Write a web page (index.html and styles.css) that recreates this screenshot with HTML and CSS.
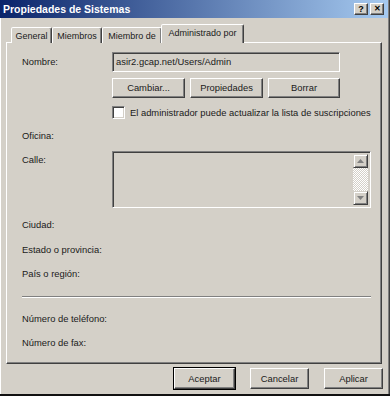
FILE: index.html
```html
<!DOCTYPE html>
<html lang="es">
<head>
  <meta charset="UTF-8">
  <title>Propiedades de Sistemas</title>
  <link rel="stylesheet" href="styles.css">
</head>
<body>
  <div class="window">
    <div class="titlebar">
      <span class="title">Propiedades de Sistemas</span>
      <div class="title-btns">
        <span class="tbtn">?</span>
        <span class="tbtn close">&#x2715;</span>
      </div>
    </div>
    <div class="content">
      <div class="tabs">
        <span class="tab t-general">General</span>
        <span class="tab t-members">Miembros</span>
        <span class="tab t-memberof">Miembro de</span>
        <span class="tab active">Administrado por</span>
      </div>
      <div class="panel">
        <div class="row r-name">
          <span class="label">Nombre:</span>
          <div class="field">asir2.gcap.net/Users/Admin</div>
        </div>
        <div class="row r-buttons">
          <span class="label"></span>
          <div class="btns">
            <button class="btn">Cambiar...</button>
            <button class="btn">Propiedades</button>
            <button class="btn">Borrar</button>
          </div>
        </div>
        <div class="row r-check">
          <span class="label"></span>
          <label class="check"><span class="box"></span>El administrador puede actualizar la lista de suscripciones</label>
        </div>
        <div class="row r-office"><span class="label">Oficina:</span></div>
        <div class="row r-street">
          <span class="label">Calle:</span>
          <div class="memo">
            <div class="scrollbar">
              <span class="arrow">
                <svg width="7" height="4" viewBox="0 0 7 4"><path d="M3.5 0L7 4H0z" fill="#808080"/></svg>
              </span>
              <span class="track"></span>
              <span class="arrow">
                <svg width="7" height="4" viewBox="0 0 7 4"><path d="M0 0H7L3.5 4z" fill="#808080"/></svg>
              </span>
            </div>
          </div>
        </div>
        <div class="row r-city"><span class="label">Ciudad:</span></div>
        <div class="row r-state"><span class="label">Estado o provincia:</span></div>
        <div class="row r-country"><span class="label">País o región:</span></div>
        <div class="sep"></div>
        <div class="row r-phone"><span class="label">Número de teléfono:</span></div>
        <div class="row r-fax"><span class="label">Número de fax:</span></div>
      </div>
      <div class="actions">
        <button class="btn default">Aceptar</button>
        <button class="btn">Cancelar</button>
        <button class="btn">Aplicar</button>
      </div>
    </div>
  </div>
</body>
</html>
```

FILE: styles.css
```css
* { box-sizing: border-box; }
body {
  margin: 0;
  background: #fff;
  font-family: "Liberation Sans", Arial, sans-serif;
  font-size: 9.4px;
  color: #1a1a1a;
}
.window {
  width: 390px;
  height: 396px;
  background: #d4d0c8;
  border-bottom: 2px solid #111;
  box-shadow: inset -1px 0 #404040, inset -2px 0 #808080, inset 1px 0 #fff;
}
.titlebar {
  height: 18px;
  margin-right: 2px;
  display: flex;
  align-items: center;
  justify-content: space-between;
  padding: 0 4px 0 3px;
  background: linear-gradient(to right, #0a246a, #a6caf0);
}
.title { color: #fff; font-weight: bold; font-size: 10.5px; }
.title-btns { display: flex; gap: 2px; }
.tbtn {
  width: 14px; height: 12px;
  display: flex; align-items: center; justify-content: center;
  background: #d4d0c8;
  border: 1px solid; border-color: #fff #404040 #404040 #fff;
  box-shadow: inset -1px -1px #808080;
  font-size: 9px; font-weight: bold; line-height: 1;
  color: #000;
}
.tbtn.close { font-size: 8px; }
.content { padding: 0 8px 0 6px; }
.tabs {
  display: flex;
  align-items: flex-end;
  height: 25px;
  padding-left: 5px;
  margin-bottom: -1px;
  position: relative;
}
.tab {
  height: 16px;
  display: flex; align-items: center; justify-content: center;
  border: 1px solid; border-bottom: none;
  border-color: #fff #404040 transparent #fff;
  box-shadow: inset -1px 0 #808080;
  border-radius: 2px 2px 0 0;
  background: #d4d0c8;
  font-size: 9px;
  white-space: nowrap;
}
.t-general { width: 41px; }
.t-members { width: 50px; }
.t-memberof { width: 60px; }
.tab.active {
  width: 83px;
  height: 19px;
  padding-bottom: 2px;
  margin-left: -1px;
}
.panel {
  height: 322px;
  padding: 0 9px 0 15px;
  border: 1px solid; border-color: #fff #404040 #404040 #fff;
  box-shadow: inset -1px -1px #808080;
}
.row { display: flex; align-items: center; line-height: 12px; }
.label { width: 90px; flex: none; }
.r-name { margin-top: 9px; }
.r-buttons { margin-top: 6px; }
.r-check { margin-top: 8px; }
.r-office { margin-top: 11px; }
.r-street { margin-top: 9px; align-items: flex-start; }
.r-street .label { padding-top: 3px; }
.r-city { margin-top: 11px; }
.r-state { margin-top: 13px; }
.r-country { margin-top: 12px; }
.r-phone { margin-top: 15px; }
.r-fax { margin-top: 12px; }
.field {
  width: 228px; height: 20px;
  padding: 0 3px;
  display: flex; align-items: center;
  border: 1px solid; border-color: #808080 #fff #fff #808080;
  box-shadow: inset 1px 1px #404040, inset -1px -1px #d4d0c8;
}
.btns { display: flex; gap: 5px; }
.btn {
  height: 20px;
  padding: 0;
  font: inherit;
  color: #1a1a1a;
  background: #d4d0c8;
  border: 1px solid; border-color: #fff #404040 #404040 #fff;
  box-shadow: inset -1px -1px #808080;
}
.btns .btn { width: 73px; }
.btns .btn:last-child { width: 72px; }
.check { display: flex; align-items: center; gap: 5px; }
.box {
  width: 13px; height: 13px;
  background: #fff;
  border: 1px solid; border-color: #808080 #fff #fff #808080;
  box-shadow: inset 1px 1px #404040, inset -1px -1px #d4d0c8;
}
.memo {
  width: 259px; height: 57px;
  padding: 2px;
  display: flex; justify-content: flex-end;
  border: 1px solid; border-color: #808080 #fff #fff #808080;
  box-shadow: inset 1px 1px #404040, inset -1px -1px #d4d0c8;
}
.scrollbar { width: 15px; display: flex; flex-direction: column; }
.arrow {
  height: 14px;
  display: flex; align-items: center; justify-content: center;
  background: #d4d0c8;
  border: 1px solid; border-color: #d4d0c8 #404040 #404040 #d4d0c8;
  box-shadow: inset 1px 1px #fff, inset -1px -1px #808080;
}
.track {
  flex: 1;
  background: repeating-conic-gradient(#fff 0 25%, #d4d0c8 0 50%) 0 0 / 2px 2px;
}
.sep {
  width: 349px;
  margin-top: 16px;
  border-top: 1px solid #808080;
  border-bottom: 1px solid #fff;
}
.actions {
  display: flex;
  justify-content: flex-end;
  gap: 15px;
  margin-top: 4px;
  margin-right: -1px;
}
.actions .btn { width: 59px; height: 21px; }
.actions .btn.default {
  width: 61px;
  outline: 1px solid #000;
  outline-offset: 0;
}
```
